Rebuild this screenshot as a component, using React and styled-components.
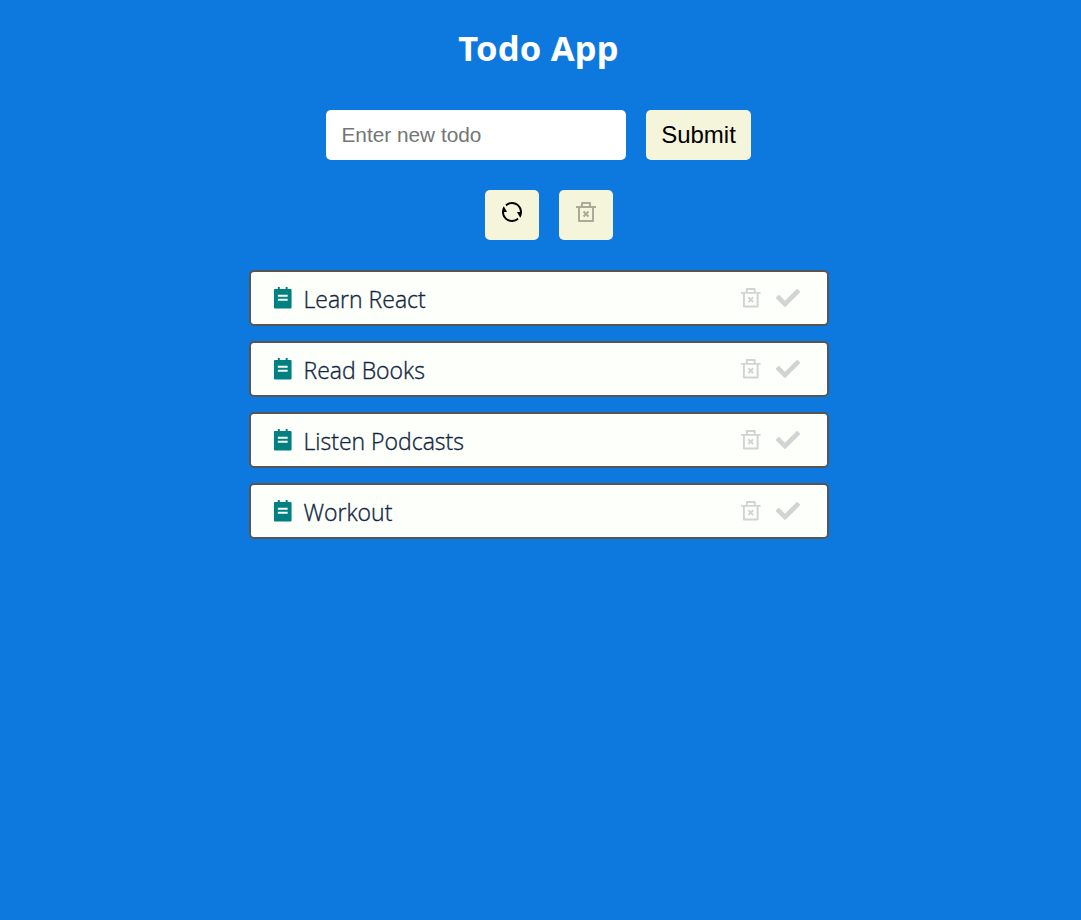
import React from "react";
import styled, { createGlobalStyle } from "styled-components";
import { RiRefreshLine } from "react-icons/ri";
import { FaCheck } from "react-icons/fa";

const GlobalStyle = createGlobalStyle`
  * { box-sizing: border-box; }
  body {
    margin: 0;
    min-height: 100vh;
    background: #0d79df;
    font-family: "Segoe UI", "Open Sans", "Noto Sans", sans-serif;
  }
`;

const Page = styled.main`
  width: 1078px;
  display: flex;
  flex-direction: column;
  align-items: center;
  padding-top: 23px;
`;

const Title = styled.h1`
  margin: 0 0 37px -1px;
  height: 50px;
  line-height: 50px;
  font-family: "Segoe UI", "Noto Sans", sans-serif;
  font-size: 34.5px;
  font-weight: 700;
  letter-spacing: 0.2px;
  color: #fff;
`;

const Form = styled.form`
  display: flex;
  gap: 20px;
  margin: 0 0 30px -1px;
`;

const Input = styled.input`
  width: 300px;
  height: 50px;
  padding: 0 15.5px;
  border: 0;
  border-radius: 5px;
  background: #fff;
  font: 20.8px "Liberation Sans", Arial, sans-serif;
  &::placeholder { color: #757575; }
`;

const Button = styled.button`
  width: ${(p) => p.$width}px;
  height: 50px;
  padding: 0 0 6px;
  border: 0;
  border-radius: 5px;
  background: beige;
  color: #000;
  display: flex;
  align-items: center;
  justify-content: center;
  font: 24px "Liberation Sans", Arial, sans-serif;
`;

const SubmitButton = styled(Button)`
  padding: 0;
`;

const Actions = styled.div`
  display: flex;
  gap: 20px;
  margin: 0 0 30px 20px;
  svg { width: 24px; height: 24px; }
`;

const Glyph = styled.svg`
  width: ${(p) => p.$size}px;
  height: ${(p) => p.$size}px;
  flex: none;
  fill: currentColor;
  opacity: ${(p) => (p.$faded ? 0.3 : 1)};
`;

const List = styled.ul`
  width: 580px;
  margin: 0;
  padding: 0;
  list-style: none;
  display: flex;
  flex-direction: column;
  gap: 15px;
`;

const Item = styled.li`
  height: 56px;
  display: flex;
  align-items: center;
  padding: 0 27px 0 19.6px;
  border: 2px solid #555;
  border-radius: 5px;
  background: #fdfffa;
`;

const Marker = styled.span`
  display: flex;
  margin-top: 1px;
  color: teal;
`;

const Label = styled.span`
  flex: 1;
  margin: 2px 0 0 9.4px;
  font-size: 23px;
  font-weight: 300;
  color: #12263f;
  -webkit-text-stroke: 0.35px #12263f;
`;

const Controls = styled.div`
  display: flex;
  align-items: center;
  gap: 14px;
  color: lightgray;
`;

const Check = styled(FaCheck)`
  width: 24px;
  height: 24px;
`;

const TrashIcon = ({ size = 24, faded }) => (
  <Glyph viewBox="0 0 24 24" $size={size} $faded={faded}>
    <path d="M17 6h5v2h-2v13a1 1 0 0 1-1 1H5a1 1 0 0 1-1-1V8H2V6h5V3a1 1 0 0 1 1-1h8a1 1 0 0 1 1 1v3zm1 2H6v12h12V8zm-4.586 6l1.768 1.768-1.414 1.414L12 15.414l-1.768 1.768-1.414-1.414L10.586 14l-1.768-1.768 1.414-1.414L12 12.586l1.768-1.768 1.414 1.414L13.414 14zM9 4v2h6V4H9z" />
  </Glyph>
);

const NoteIcon = () => (
  <Glyph viewBox="0 0 24 24" $size={23.5}>
    <path d="M17 2h3a1 1 0 0 1 1 1v18a1 1 0 0 1-1 1H4a1 1 0 0 1-1-1V3a1 1 0 0 1 1-1h3V0h2v2h6V0h2v2zM7 8v2h10V8H7zm0 4v2h10v-2H7z" />
  </Glyph>
);

const todos = ["Learn React", "Read Books", "Listen Podcasts", "Workout"];

export default function App() {
  return (
    <Page>
      <GlobalStyle />
      <Title>Todo App</Title>
      <Form onSubmit={(e) => e.preventDefault()}>
        <Input placeholder="Enter new todo" />
        <SubmitButton $width={105} type="submit">Submit</SubmitButton>
      </Form>
      <Actions>
        <Button $width={54} aria-label="Reset"><RiRefreshLine /></Button>
        <Button $width={54} aria-label="Clear completed" disabled><TrashIcon faded /></Button>
      </Actions>
      <List>
        {todos.map((todo) => (
          <Item key={todo}>
            <Marker><NoteIcon /></Marker>
            <Label>{todo}</Label>
            <Controls>
              <TrashIcon size={23.5} />
              <Check />
            </Controls>
          </Item>
        ))}
      </List>
    </Page>
  );
}
